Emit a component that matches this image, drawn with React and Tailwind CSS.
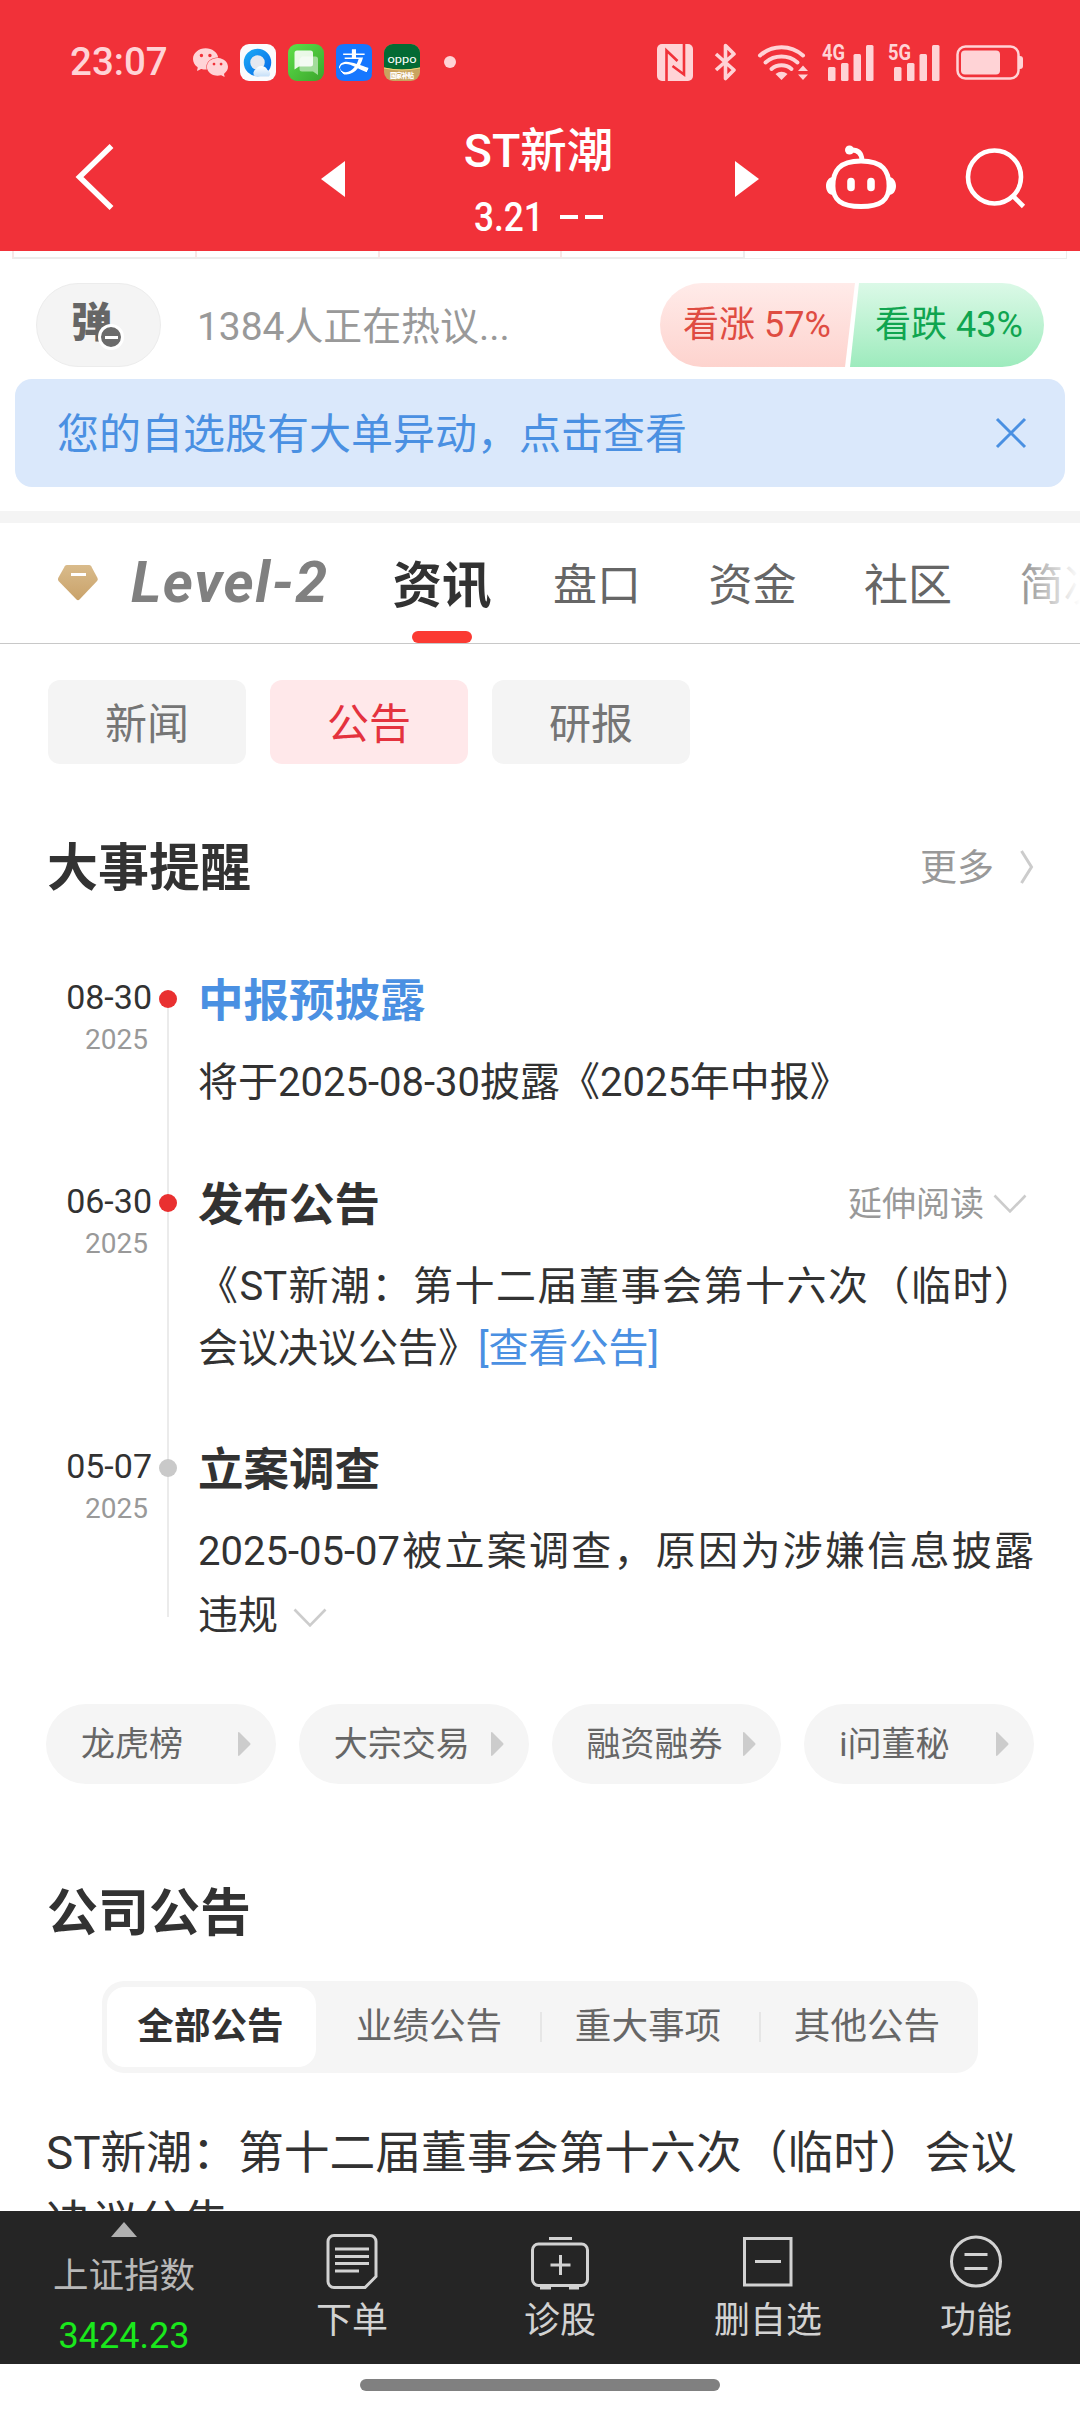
import React from 'react'
import { SiAlipay, SiWechat } from 'react-icons/si'

const tabs = ['盘口', '资金', '社区', '简况']

const chips = [
  { label: '新闻' },
  { label: '公告', active: true },
  { label: '研报' },
]

const shortcuts = ['龙虎榜', '大宗交易', '融资融券', 'i问董秘']

const filters = ['全部公告', '业绩公告', '重大事项', '其他公告']

const Signal = ({ label }) => (
  <svg className="overflow-visible" width="52" height="38" viewBox="0 0 52 38" fill="currentColor">
    <text x="0" y="17" fontSize="22" fontWeight="700" textLength="23" lengthAdjust="spacingAndGlyphs">
      {label}
    </text>
    <rect x="6" y="24" width="7.5" height="14" rx="1.5" />
    <rect x="19" y="20" width="7.5" height="18" rx="1.5" />
    <rect x="31.5" y="11" width="7.5" height="27" rx="1.5" />
    <rect x="44" y="2" width="7.5" height="36" rx="1.5" />
  </svg>
)

const StatusBar = () => (
  <div className="flex h-[124px] items-center text-[#ffd3d6]">
    <span className="ml-[70px] w-[123px] text-[38.5px] font-medium leading-none">23:07</span>
    <SiWechat className="h-[35px] w-[35px]" />
    <div className="ml-3 flex gap-3">
      <svg width="36" height="37" viewBox="0 0 36 37">
        <defs>
          <linearGradient id="cloudRing" x1="0" y1="0" x2="1" y2="1">
            <stop offset="0" stopColor="#1aa5f5" />
            <stop offset="1" stopColor="#0a6fe8" />
          </linearGradient>
          <linearGradient id="cloud" x1="0" y1="0" x2="0" y2="1">
            <stop offset="0" stopColor="#fff" />
            <stop offset="1" stopColor="#c5dff8" />
          </linearGradient>
        </defs>
        <rect width="36" height="37" rx="9" fill="#fbfbfd" />
        <circle cx="17.5" cy="18.5" r="10.5" fill="#e4e8f0" stroke="url(#cloudRing)" strokeWidth="6.5" />
        <path d="M15 32.5a4.5 4.5 0 0 1 1-7.5 6.5 6.5 0 0 1 11.5 1 4 4 0 0 1 1.5 6.5z" fill="url(#cloud)" />
      </svg>
      <svg width="36" height="37" viewBox="0 0 36 37">
        <defs>
          <linearGradient id="sms" x1="0" y1="0" x2="1" y2="1">
            <stop offset="0" stopColor="#5de04a" />
            <stop offset="1" stopColor="#3ba52c" />
          </linearGradient>
        </defs>
        <rect width="36" height="37" rx="9" fill="url(#sms)" />
        <path d="M14 12.5h13.5a2.5 2.5 0 0 1 2.5 2.5v16l-5-3.5H14a2.5 2.5 0 0 1-2.5-2.5V15z" fill="#a3dc9b" />
        <path d="M9 6.5h13.5A2.5 2.5 0 0 1 25 9v11a2.5 2.5 0 0 1-2.5 2.5H11l-4.5 3V9A2.5 2.5 0 0 1 9 6.5z" fill="#fff" fillOpacity=".88" />
      </svg>
      <span className="flex h-[37px] w-[36px] items-center justify-center rounded-[9px] bg-[radial-gradient(#fff_60%,#1677ff_62%)]">
        <SiAlipay className="h-[37px] w-[37px] text-[#1677ff]" />
      </span>
      <svg width="36" height="37" viewBox="0 0 36 37">
        <clipPath id="oppoClip">
          <rect width="36" height="37" rx="9" />
        </clipPath>
        <g clipPath="url(#oppoClip)">
          <rect width="36" height="37" fill="#c9a45f" />
          <path d="M0 0h36v23.5q-18 4-36 0z" fill="#046a34" />
          <path d="M0 24q18 4 36 0" fill="none" stroke="#f3d77c" />
          <text x="3.5" y="18.5" fontSize="11" fill="#fff" textLength="29" lengthAdjust="spacingAndGlyphs">
            oppo
          </text>
          <text x="6" y="33.5" fontSize="6.5" fontWeight="900" fill="#fff" textLength="24">
            国家补贴
          </text>
        </g>
      </svg>
    </div>
    <span className="ml-6 h-3 w-3 rounded-full bg-[#ffd3d6]" />

    <div className="ml-auto mr-[56px] flex items-center">
      <svg width="36" height="37" viewBox="0 0 36 37">
        <rect width="36" height="37" rx="5" fill="currentColor" />
        <path d="M9.5 37V6.5L20.5 17M27 0v30.5L15.5 22" fill="none" stroke="#f13139" strokeWidth="2.6" />
      </svg>
      <svg className="ml-[21px]" width="24" height="38" viewBox="0 0 24 38" fill="none" stroke="currentColor" strokeWidth="3.6" strokeLinejoin="round">
        <path d="M2 11l18 16-8.5 8.5v-33L20 11 2 27" />
      </svg>
      <svg className="ml-[19px]" width="52" height="38" viewBox="0 0 52 38" fill="none" stroke="currentColor" strokeWidth="4" strokeLinecap="round">
        <path d="M3 12.5a32 32 0 0 1 43 0" />
        <path d="M8.5 19.5a24.5 24.5 0 0 1 32 0" />
        <path d="M14.5 26a15.5 15.5 0 0 1 20 0" />
        <path d="M18.5 31q6-4.5 12 0l-6 6z" fill="currentColor" stroke="none" />
        <path d="M41 28l5-5.5 5 5.5zM41 31.5l5 5.5 5-5.5z" fill="currentColor" stroke="none" />
      </svg>
      <div className="ml-[13px] flex gap-3.5">
        <Signal label="4G" />
        <Signal label="5G" />
      </div>
      <svg className="ml-4" width="68" height="36" viewBox="0 0 68 36">
        <rect x="1.5" y="2.5" width="61" height="32" rx="8" fill="none" stroke="currentColor" strokeWidth="2.5" />
        <rect x="5" y="6.5" width="39" height="24" rx="4" fill="currentColor" />
        <path d="M63 12h1a3 3 0 0 1 3 3v7a3 3 0 0 1-3 3h-1z" fill="currentColor" />
      </svg>
    </div>
  </div>
)

const NavBar = () => (
  <div className="flex h-[127px] text-white">
    <svg className="ml-[74px] mt-4" width="42" height="72" viewBox="0 0 42 72" fill="none" stroke="currentColor" strokeWidth="5.5">
      <path d="M37.5 6L5.5 37l32 31" />
    </svg>
    <svg className="ml-[205px] mt-[37px]" width="24" height="36" viewBox="0 0 24 36" fill="currentColor">
      <path d="M0 18L24 0v36z" />
    </svg>
    <div className="flex w-[390px] flex-col items-center">
      <h1 className="-mt-0.5 -ml-[3px] text-[46.5px] font-medium leading-[58px]">ST新潮</h1>
      <div className="-ml-1 mt-[15px] flex h-[44px] items-center text-[40.5px] font-medium">
        <span className="w-[66px] origin-left scale-x-[0.87]">3.21</span>
        <span className="ml-5 h-[4px] w-[18px] bg-white" />
        <span className="ml-[7px] h-[4px] w-[18px] bg-white" />
      </div>
    </div>
    <svg className="mt-[37px]" width="24" height="36" viewBox="0 0 24 36" fill="currentColor">
      <path d="M24 18L0 0v36z" />
    </svg>
    <svg className="ml-[67px] mt-[21px]" width="70" height="66" viewBox="0 0 70 66" fill="none" stroke="currentColor" strokeWidth="4.8" strokeLinecap="round">
      <path d="M35 16c22 0 28 10 28 25 0 14-8 20.5-28 20.5S7 55 7 41c0-15 6-25 28-25z" />
      <path d="M36 15c-.5-7-4-10-10-10" />
      <circle cx="23.5" cy="5" r="4.5" fill="currentColor" stroke="none" />
      <path d="M7 32c-4 0-7 4-7 9s3 9 7 9zM63 32c4 0 7 4 7 9s-3 9-7 9z" fill="currentColor" stroke="none" />
      <path d="M25 36.5v6M45 36.5v6" strokeWidth="7.6" />
    </svg>
    <svg className="ml-[69px] mt-[23px]" width="62" height="62" viewBox="0 0 62 62" fill="none" stroke="currentColor" strokeWidth="4.6">
      <circle cx="29.5" cy="30" r="26.5" />
      <path d="M48 49l10.5 10.5" />
    </svg>
  </div>
)

const Discussion = () => (
  <>
    {/* bottom edge of the quote table above */}
    <div className="ml-3 flex h-[8px]">
      <div className="h-full w-[183px] border-b-2 border-l-2 border-b-[#ececec] border-l-[#f7e6e6]" />
      <div className="h-full w-[183px] border-b-2 border-l-2 border-b-[#ececec] border-l-[#f7e6e6]" />
      <div className="h-full w-[182px] border-b-2 border-l-2 border-b-[#ececec] border-l-[#f7e6e6]" />
      <div className="h-full w-[183px] border-b-2 border-l-2 border-b-[#ececec] border-l-[#f7e6e6]" />
      <div className="h-full w-[324px] border-b border-l-2 border-r border-[#ececec]" />
    </div>
    <div className="mt-6 flex h-[84px] items-center pl-9 pr-9">
      <div className="relative flex h-[84px] w-[125px] items-center rounded-full border border-[#ececec] bg-[#f4f4f4] pl-[34px]">
        <span className="-mt-1 text-[41px] font-black leading-none text-[#666]">弹</span>
        <span className="absolute left-[61px] top-[40px] flex h-[26px] w-[26px] items-center justify-center rounded-full border-[3px] border-white bg-[#6b6b6b]">
          <span className="h-[3px] w-[13px] bg-white" />
        </span>
      </div>
      <span className="ml-9 pt-1 text-[38.9px] leading-none text-[#999]">1384人正在热议...</span>
      <div className="ml-auto flex h-[84px] text-[36px] leading-[84px]">
        <div className="w-[195px] rounded-l-full bg-gradient-to-b from-[#ffebe9] to-[#fdd3ce] pl-[23px] text-[#df4c42] [clip-path:polygon(0_0,100%_0,185px_100%,0_100%)]">
          看涨 57%
        </div>
        <div className="-ml-[5px] w-[194px] rounded-r-full bg-gradient-to-b from-[#dbf9e7] to-[#9debbd] pl-[25px] text-[#10a550] [clip-path:polygon(9px_0,100%_0,100%_100%,0_100%)]">
          看跌 43%
        </div>
      </div>
    </div>
    <div className="mx-[15px] mt-3 flex h-[108px] items-center justify-between rounded-[17px] bg-[#dae8fb] pl-[42px] pr-[38px] text-[#4a90e2]">
      <span className="pt-[3px] text-[42px]">您的自选股有大单异动，点击查看</span>
      <svg width="32" height="32" viewBox="0 0 32 32" stroke="currentColor" strokeWidth="3">
        <path d="M2 2l28 28M30 2L2 30" />
      </svg>
    </div>
  </>
)

const TabBar = () => (
  <div className="relative flex h-[121px] items-center overflow-hidden whitespace-nowrap border-b border-[#c8c8c8]">
    <svg className="ml-[57px] shrink-0" width="42" height="38" viewBox="0 0 42 38">
      <defs>
        <linearGradient id="gem" x1="0" y1="0" x2="0" y2="1">
          <stop offset="0" stopColor="#d9bb8b" />
          <stop offset="1" stopColor="#c9a26a" />
        </linearGradient>
      </defs>
      <path d="M10 1h22q1.5 0 2.2 1.2L40.5 14q.8 1.6-.4 3L22.5 35.5q-1.5 1.3-3 0L1.500 17q-1-1.400-.3-3L7.8 2.2Q8.5 1 10 1z" fill="url(#gem)" />
      <path d="M14 10.5h15" stroke="#fff" strokeWidth="3" />
    </svg>
    <span className="ml-[32px] w-[199px] shrink-0 text-[57.5px] font-bold italic leading-none tracking-[1.6px] text-[#808080]">Level-2</span>
    <div className="relative ml-[62px] flex h-full w-[100px] shrink-0 items-center justify-center">
      <span className="pt-1.5 text-[49.5px] font-bold text-[#323232]">资讯</span>
      <span className="absolute bottom-0 left-[20px] h-3 w-[60px] rounded-full bg-[#fb3a32]" />
    </div>
    <div className="ml-[61px] flex shrink-0 gap-[67.5px] pt-[5px] text-[44px] text-[#666]">
      {tabs.map((tab) => (
        <span key={tab}>{tab}</span>
      ))}
    </div>
    <div className="absolute right-0 top-0 h-[120px] w-[66px] bg-gradient-to-r from-white/20 to-white" />
  </div>
)

const DownChevron = () => (
  <svg className="inline-block" width="34" height="20" viewBox="0 0 34 20" fill="none" stroke="#ccc" strokeWidth="2.6">
    <path d="M1.5 1.5L17 17.5l15.5-16" />
  </svg>
)

const Event = ({ date, title, titleClass, dotClass, heightClass, lineClass, extra, children }) => (
  <div className={`flex ${heightClass}`}>
    <div className="w-[106px] pt-1 text-right">
      <div className="text-[34px] leading-[46px] text-[#323232]">{date}</div>
      <div className="pr-1 text-[28px] leading-[40px] text-[#999]">2025</div>
    </div>
    <div className="relative flex w-[32px] justify-center">
      <div className={`w-[2px] bg-[#ebebeb] ${lineClass}`} />
      <span className={`absolute left-[7px] top-[20px] h-[18px] w-[18px] rounded-full ${dotClass}`} />
    </div>
    <div className="ml-[14px] w-[836px]">
      <div className="flex h-[60px] items-center justify-between">
        <h3 className={`pt-1 text-[45.5px] font-bold ${titleClass}`}>{title}</h3>
        {extra}
      </div>
      <div className="mt-[22px] text-justify text-[40px] leading-[62px] text-[#323232]">{children}</div>
    </div>
  </div>
)

const Reminders = () => (
  <div className="px-[46px]">
    <div className="mt-[73px] flex h-[60px] items-center justify-between">
      <h2 className="pl-px pt-[5px] text-[51px] font-bold text-[#323232]">大事提醒</h2>
      <div className="flex items-center gap-[26px] text-[37px] text-[#999]">
        <span className="pt-[3px]">更多</span>
        <svg width="14" height="34" viewBox="0 0 14 34" fill="none" stroke="#ccc" strokeWidth="3">
          <path d="M1.5 1l10 16-10 16" />
        </svg>
      </div>
    </div>

    <div className="mt-[73px]">
      <Event
        date="08-30"
        title="中报预披露"
        titleClass="text-[#4a90e2]"
        dotClass="bg-[#e93030]"
        heightClass="h-[204px]"
        lineClass="mt-7"
      >
        将于2025-08-30披露《2025年中报》
      </Event>
      <Event
        date="06-30"
        title="发布公告"
        titleClass="text-[#323232]"
        dotClass="bg-[#e93030]"
        heightClass="h-[265px]"
        lineClass="h-full"
        extra={
          <div className="flex items-center gap-[9px] pr-[7px] text-[34px] text-[#999]">
            延伸阅读
            <DownChevron />
          </div>
        }
      >
        《ST新潮：第十二届董事会第十六次（临时）会议决议公告》<span className="text-[#4a90e2]">[查看公告]</span>
      </Event>
      <Event
        date="05-07"
        title="立案调查"
        titleClass="text-[#323232]"
        dotClass="bg-[#c9c9c9]"
        heightClass="h-[265px]"
        lineClass="h-[178px]"
      >
        2025-05-07被立案调查，原因为涉嫌信息披露
        <span className="inline-block pt-0.5">违规</span>
        <span className="ml-[15px]">
          <DownChevron />
        </span>
      </Event>
    </div>

    <div className="grid grid-cols-4 gap-[23px]">
      {shortcuts.map((name) => (
        <div key={name} className="flex h-20 items-center justify-between rounded-full bg-[#f5f5f5] pl-[35px] pr-[25px] text-[34px] text-[#666]">
          {name}
          <svg width="13" height="24" viewBox="0 0 13 24" fill="#ccc">
            <path d="M0 1q0-1.5 1.5-.5L12 11q1 1 0 2L1.5 23.5Q0 24.5 0 23z" />
          </svg>
        </div>
      ))}
    </div>
  </div>
)

const Announcements = () => (
  <div className="px-[46px]">
    <h2 className="mt-[100px] pl-px text-[51px] font-bold leading-[60px] text-[#323232]">公司公告</h2>
    <div className="mx-auto mt-[37px] grid h-[92px] w-[876px] grid-cols-4 items-center rounded-[22px] bg-[#f5f5f5] text-[36.6px] text-[#666]">
      {filters.map((name, i) => (
        <div key={name} className="flex h-full items-center">
          {i === 0 ? (
            <span className="ml-[5px] flex h-20 w-[209px] items-center justify-center rounded-[18px] bg-white pr-0.5 pt-px font-bold text-[#323232]">
              {name}
            </span>
          ) : (
            <>
              <span className={i > 1 ? 'h-[30px] w-[2px] bg-[#e6e6e6]' : 'w-[2px]'} />
              <span className="flex-1 pr-[5px] pt-px text-center">{name}</span>
            </>
          )}
        </div>
      ))}
    </div>
    <p className="mt-[46px] whitespace-nowrap text-[45.8px] leading-[69px] text-[#323232]">
      ST新潮：第十二届董事会第十六次（临时）会议
      <br />
      决议公告
    </p>
  </div>
)

const BottomItem = ({ label, children }) => (
  <div className="flex w-[208px] flex-col items-center pt-[20px]">
    <svg width="60" height="60" viewBox="0 0 60 60" fill="none" stroke="currentColor" strokeWidth="3">
      {children}
    </svg>
    <span className="mt-[7px] text-[36px] leading-[46px]">{label}</span>
  </div>
)

const BottomBar = () => (
  <div className="flex h-[153px] shrink-0 bg-[#252525] text-[#d2d2d2]">
    <div className="flex w-[248px] flex-col items-center pt-[11px]">
      <svg width="26" height="15" viewBox="0 0 26 15" fill="#b0b0b0">
        <path d="M13 0l13 15H0z" />
      </svg>
      <span className="mt-[16px] text-[35.5px] leading-[46px] text-[#b8b8b8]">上证指数</span>
      <span className="mt-[14px] text-[36px] leading-[46px] text-[#1ae81c]">3424.23</span>
    </div>
    <BottomItem label="下单">
      <path d="M12 4.5h36a6 6 0 0 1 6 6v35L43 56.5H12a6 6 0 0 1-6-6v-40a6 6 0 0 1 6-6z" />
      <path d="M13 18h34M13 25.5h34M13 32.5h34M13 40h24" />
    </BottomItem>
    <BottomItem label="诊股">
      <path d="M19 7.5h23" />
      <rect x="2.5" y="13" width="55" height="41.5" rx="6" />
      <path d="M30.5 24v20M20.5 34h20" />
      <path d="M10 56.5h11M39 56.5h10" strokeWidth="4" />
    </BottomItem>
    <BottomItem label="删自选">
      <path d="M6.5 7.5h46.500v46.500h-46.500zM17 30.5h26" />
    </BottomItem>
    <BottomItem label="功能">
      <circle cx="30" cy="30.5" r="24.5" />
      <path d="M18.5 23.5h23M18.5 37.5h23" />
    </BottomItem>
  </div>
)

const App = () => {
  return (
    <div className="flex h-[2412px] w-[1080px] flex-col overflow-hidden bg-white font-[Roboto,'Noto_Sans_CJK_SC',sans-serif]">
      <header className="h-[251px] shrink-0 bg-[#f13139]">
        <StatusBar />
        <NavBar />
      </header>
      <main className="min-h-0 flex-1 overflow-hidden">
        <Discussion />
        <div className="mt-6 h-3 bg-[#f4f4f4]" />
        <TabBar />
        <div className="ml-12 mt-9 flex gap-6">
          {chips.map(({ label, active }) => (
            <div
              key={label}
              className={`flex h-[84px] w-[198px] items-center justify-center rounded-xl pt-1 text-[42px] ${
                active ? 'bg-[#ffe8ea] text-[#e4323e]' : 'bg-[#f4f4f4] text-[#757575]'
              }`}
            >
              {label}
            </div>
          ))}
        </div>
        <Reminders />
        <Announcements />
      </main>
      <BottomBar />
      <div className="flex h-12 shrink-0 justify-center pt-[15px]">
        <span className="h-3 w-[360px] rounded-full bg-[#808080]" />
      </div>
    </div>
  )
}

export default App
